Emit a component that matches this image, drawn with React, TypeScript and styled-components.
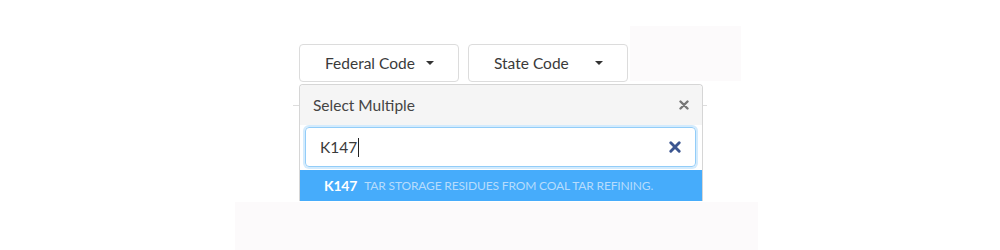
import styled, { createGlobalStyle } from "styled-components";

const GlobalStyle = createGlobalStyle`
  body {
    margin: 0;
    background: #ffffff;
    font-family: Lato, "Open Sans", sans-serif;
    color: #333333;
  }
`

const Page = styled.div`
  width: 1000px;
  height: 250px;
  overflow: hidden;
  padding: 26px 0 0 299px;
  box-sizing: border-box;
  display: flex;
  flex-direction: column;
`

const Toolbar = styled.div`
  display: flex;
  align-items: flex-start;
  gap: 9px;
`

const FilterButton = styled.button`
  width: 160px;
  height: 38px;
  margin-top: 18px;
  box-sizing: border-box;
  padding: 0 24px 0 25px;
  display: flex;
  align-items: center;
  justify-content: space-between;
  background: #ffffff;
  border: 1px solid #dcdcdc;
  border-radius: 4px;
  font-family: inherit;
  font-size: 15.5px;
  color: #3a3a3a;
`

const Caret = styled.span`
  width: 0;
  height: 0;
  border-left: 4.5px solid transparent;
  border-right: 4.5px solid transparent;
  border-top: 4.5px solid #333333;
`

const Ghost = styled.div<{ $w: number; $h: number; $shift?: number; $top?: number }>`
  width: ${p => p.$w}px;
  height: ${p => p.$h}px;
  margin-left: ${p => p.$shift ?? 0}px;
  margin-top: ${p => p.$top ?? 0}px;
  background: #fcfafb;
`

const Popover = styled.div`
  position: relative;
  margin-top: 2px;
  width: 404px;
  box-sizing: border-box;
  border: 1px solid #d6d6d6;
  border-bottom: none;
  border-radius: 4px 4px 0 0;
  background: #ffffff;

  &::before {
    content: "";
    position: absolute;
    top: 20px;
    left: -7px;
    right: -5px;
    height: 1px;
    background: #dddddd;
    z-index: -1;
  }
`

const PopHeader = styled.div`
  height: 40px;
  display: flex;
  align-items: center;
  justify-content: space-between;
  padding: 0 13px;
  background: #f5f5f5;
  border-radius: 4px 4px 0 0;
  font-size: 15.5px;
  color: #444444;
`

const SearchBox = styled.div`
  margin: 2px 6px 0 5px;
  height: 40px;
  box-sizing: border-box;
  display: flex;
  align-items: center;
  justify-content: space-between;
  padding: 0 14px 0 14px;
  border: 1px solid #93cdf8;
  border-radius: 4px;
  box-shadow: 0 0 0 2px #d3ebfd;
  font-size: 15.5px;
  color: #3a3a3a;
`

const Cursor = styled.span`
  display: inline-block;
  width: 1px;
  height: 19px;
  margin-left: 1px;
  vertical-align: -4px;
  background: #222222;
`

const OptionRow = styled.div<{ $active: boolean }>`
  margin-top: 3px;
  height: 31px;
  display: flex;
  align-items: center;
  gap: 7px;
  padding-left: 24px;
  background: ${p => p.$active ? "#46acfb" : "#ffffff"};
`

const Code = styled.span`
  font-weight: 700;
  font-size: 14px;
  color: #ffffff;
  letter-spacing: -0.2px;
`

const Desc = styled.span`
  font-size: 12px;
  text-transform: uppercase;
  color: #b7dcfc;
  letter-spacing: -0.15px;
`

function Cross({ color, size }: { color: string; size: number }) {
  return (
    <svg width={size} height={size} viewBox="0 0 10 10">
      <path d="M1.5 1.5 L8.5 8.5 M8.5 1.5 L1.5 8.5" stroke={color} strokeWidth="2.4" strokeLinecap="round" />
    </svg>
  );
}

export default function App() {
  return (
    <>
      <GlobalStyle />
      <Page>
        <Toolbar>
          <FilterButton>Federal Code<Caret /></FilterButton>
          <FilterButton>State Code<Caret /></FilterButton>
          <Ghost $w={111} $h={55} $shift={-7} />
        </Toolbar>
        <Popover>
          <PopHeader>
            Select Multiple
            <Cross color="#777777" size={10} />
          </PopHeader>
          <SearchBox>
            <span>K147<Cursor /></span>
            <Cross color="#3b5590" size={12} />
          </SearchBox>
          <OptionRow $active>
            <Code>K147</Code>
            <Desc>Tar storage residues from coal tar refining.</Desc>
          </OptionRow>
        </Popover>
        <Ghost $w={523} $h={48} $shift={-64} $top={1} />
      </Page>
    </>
  );
}
